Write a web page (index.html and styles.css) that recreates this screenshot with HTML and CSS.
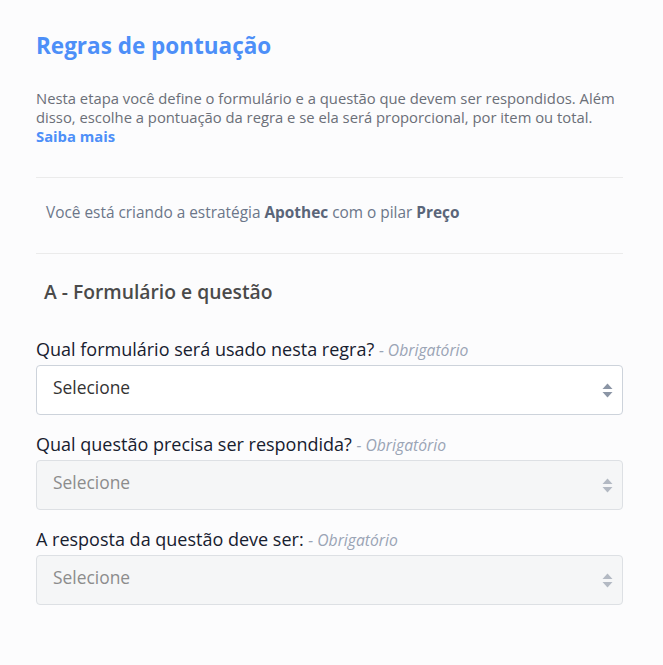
FILE: index.html
```html
<!DOCTYPE html>
<html lang="pt-BR">
<head>
<meta charset="utf-8">
<title>Regras de pontuação</title>
<link rel="stylesheet" href="styles.css">
</head>
<body>
<main class="page">
  <h1 class="title">Regras de pontuação</h1>
  <p class="intro">Nesta etapa você define o formulário e a questão que devem ser respondidos. Além disso, escolhe a pontuação da regra e se ela será proporcional, por item ou total. <a class="more" href="#">Saiba mais</a></p>
  <div class="context">
    <p>Você está criando a estratégia <strong>Apothec</strong> com o pilar <strong>Preço</strong></p>
  </div>
  <h2 class="section">A - Formulário e questão</h2>

  <div class="field">
    <label class="label">Qual formulário será usado nesta regra? <em class="req">- Obrigatório</em></label>
    <div class="select">
      <span>Selecione</span>
      <svg class="arrows" width="11" height="15" viewBox="0 0 11 15"><path d="M5.5 0.5 L10.5 6 H0.5 Z"/><path d="M0.5 9 H10.5 L5.5 14.5 Z"/></svg>
    </div>
  </div>

  <div class="field">
    <label class="label">Qual questão precisa ser respondida? <em class="req">- Obrigatório</em></label>
    <div class="select disabled">
      <span>Selecione</span>
      <svg class="arrows" width="11" height="15" viewBox="0 0 11 15"><path d="M5.5 0.5 L10.5 6 H0.5 Z"/><path d="M0.5 9 H10.5 L5.5 14.5 Z"/></svg>
    </div>
  </div>

  <div class="field">
    <label class="label">A resposta da questão deve ser: <em class="req">- Obrigatório</em></label>
    <div class="select disabled">
      <span>Selecione</span>
      <svg class="arrows" width="11" height="15" viewBox="0 0 11 15"><path d="M5.5 0.5 L10.5 6 H0.5 Z"/><path d="M0.5 9 H10.5 L5.5 14.5 Z"/></svg>
    </div>
  </div>
</main>
</body>
</html>
```

FILE: styles.css
```css
* { box-sizing: border-box; }
html, body {
  margin: 0;
  padding: 0;
  background: #fcfcfd;
}
body {
  font-family: "Open Sans", "Noto Sans", sans-serif;
  color: #333;
}
.page {
  width: 623px;
  padding: 31px 0 40px 36px;
}
.title {
  margin: 0;
  font-size: 22.5px;
  line-height: 30px;
  font-weight: 700;
  color: #4d8ff8;
}
.intro {
  margin: 28px 0 0;
  font-size: 14.8px;
  line-height: 19px;
  color: #6b6f78;
}
.more {
  color: #4d8ff8;
  font-weight: 700;
  text-decoration: none;
}
.context {
  margin-top: 31px;
  border-top: 1px solid #ebebeb;
  border-bottom: 1px solid #ebebeb;
  padding: 25px 10px 31px;
}
.context p {
  margin: 0;
  font-size: 15.4px;
  line-height: 19px;
  color: #6b7689;
}
.context strong {
  font-weight: 700;
  color: #5a6579;
}
.section {
  margin: 26px 0 34px 8px;
  font-size: 19.3px;
  line-height: 24px;
  font-weight: 600;
  color: #4a4a4a;
}
.field {
  margin-bottom: 18px;
}
.label {
  display: block;
  margin-bottom: 4px;
  font-size: 18px;
  line-height: 22px;
  font-weight: 500;
  color: #17202f;
}
.req {
  font-size: 15.7px;
  font-weight: 400;
  color: #9aa4b5;
}
.select {
  display: flex;
  align-items: center;
  justify-content: space-between;
  height: 50px;
  padding: 0 9px 0 16px;
  border: 1px solid #cdd3db;
  border-radius: 4px;
  background: #fff;
  font-size: 17.4px;
  color: #333;
}
.select span {
  margin-top: -7px;
}
.arrows {
  fill: #8b95a5;
}
.select.disabled {
  background: #f5f6f7;
  border-color: #dde0e4;
  color: #8c8c8c;
}
.select.disabled .arrows {
  fill: #b3b9c3;
}
```
